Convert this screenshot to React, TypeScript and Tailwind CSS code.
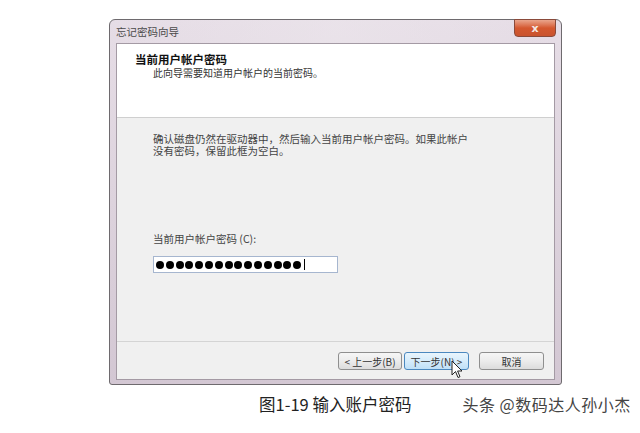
import React from "react";

const cjk = { fontFamily: '"Noto Sans CJK SC", "Noto Sans", sans-serif' };

function Cursor() {
  return (
    <svg className="absolute left-[46px] top-[7px]" width="13" height="20" viewBox="0 0 13 20">
      <path d="M1 1 L1 15 L4.5 11.5 L7 17.5 L9 16.7 L6.6 11 L11 11 Z" fill="#fff" stroke="#222" strokeWidth="1" strokeLinejoin="round" />
    </svg>
  );
}

export default function App() {
  const dots = Array.from({ length: 15 });
  return (
    <div className="w-[640px] h-[433px] bg-white relative overflow-hidden" style={cjk}>
      <div className="pl-[109px] pt-[19px]">
        <div className="relative w-[453px] h-[366px] rounded-t-[6px] rounded-b-[3px] border border-[#6e6a6e] bg-gradient-to-b from-[#e6dde6] via-[#ddd3dd] to-[#d3c7d3] flex flex-col px-[6px] pb-[4px]">
          {/* title bar */}
          <div className="h-[23px] flex items-center text-[10.5px] text-[#4a4a4a] bg-gradient-to-r from-transparent via-[#ece6ec]/60 to-transparent">
            忘记密码向导
          </div>
          <div className="absolute right-[5px] top-[-1px] w-[42px] h-[18px] rounded-b-[4px] border border-[#8a4a3a] bg-gradient-to-b from-[#e9a58c] via-[#d4582f] to-[#c9532e] flex items-center justify-center">
            <span className="text-[#f4e8e4] text-[11px] font-bold leading-none" style={{ fontFamily: '"DejaVu Sans", sans-serif' }}>x</span>
          </div>
          {/* client area */}
          <div className="flex-1 border border-[#a49aa4] bg-[#f0f0f0] flex flex-col">
            <div className="h-[74px] bg-white border-b border-[#cfcfcf] pl-[18px] pt-[8px]">
              <div className="text-[11.5px] font-bold text-[#111] leading-[15px]">当前用户帐户密码</div>
              <div className="pl-[18px] text-[10px] text-[#333] leading-[11px]">此向导需要知道用户帐户的当前密码。</div>
            </div>
            <div className="flex-1 pl-[36px] pt-[15px] flex flex-col">
              <div className="w-[330px] text-[10.5px] text-[#444]">
                <div className="leading-[11px]">确认磁盘仍然在驱动器中，然后输入当前用户帐户密码。如果此帐户</div>
                <div className="leading-[11px] mt-[1px]">没有密码，保留此框为空白。</div>
              </div>
              <div className="mt-[77px] text-[10.5px] text-[#444] leading-[12px]">当前用户帐户密码 (C):</div>
              <div className="mt-[11px] w-[185px] h-[17px] bg-white border border-[#a6b6cf] flex items-center pl-[2px] gap-[1.8px]">
                {dots.map((_, i) => (
                  <span key={i} className="w-[8px] h-[8px] rounded-full bg-black shrink-0" />
                ))}
                <span className="w-[1px] h-[11px] bg-black ml-[1px]" />
              </div>
            </div>
            <div className="h-[38px] border-t border-[#d4d4d4] flex items-start justify-end pr-[10px] pt-[10px] text-[10px] text-[#333]">
              <div className="w-[64px] h-[18px] rounded-[3px] border border-[#8f8f8f] bg-gradient-to-b from-[#f6f6f6] via-[#ececec] to-[#dcdcdc] flex items-center justify-center">
                &lt; 上一步(B)
              </div>
              <div className="relative ml-[2px] w-[65px] h-[18px] rounded-[3px] border border-[#4b88bf] bg-gradient-to-b from-[#e9f5fd] via-[#d6ecfb] to-[#bfe0f7] flex items-center justify-center">
                下一步(N) &gt;
                <Cursor />
              </div>
              <div className="ml-[10px] w-[65px] h-[18px] rounded-[3px] border border-[#8f8f8f] bg-gradient-to-b from-[#f6f6f6] via-[#ececec] to-[#dcdcdc] flex items-center justify-center">
                取消
              </div>
            </div>
          </div>
        </div>
      </div>
      <div className="flex items-center mt-[9px] h-[20px]">
        <div className="ml-[259px] text-[16.5px] text-[#222] whitespace-nowrap">图1-19 输入账户密码</div>
        <div className="ml-[51px] text-[16px] text-[#444] whitespace-nowrap tracking-[0.5px]">头条 @数码达人孙小杰</div>
      </div>
    </div>
  );
}
